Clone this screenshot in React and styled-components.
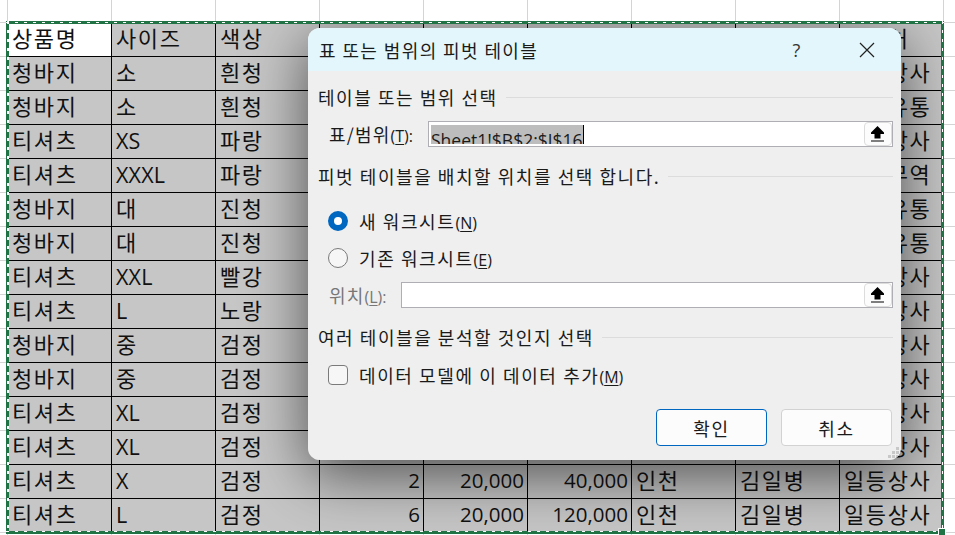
import styled, { createGlobalStyle } from "styled-components";

const GlobalStyle = createGlobalStyle`
  html, body {
    margin: 0;
    padding: 0;
    background: #fff;
    overflow: hidden;
  }
`;

const KO = `"Open Sans", "Noto Sans CJK KR", sans-serif`;

const rows = [
  ["상품명", "사이즈", "색상", "수량", "단가", "금액", "지역", "담당자", "거래처"],
  ["청바지", "소", "흰청", "3", "30,000", "90,000", "서울", "이대한", "일등상사"],
  ["청바지", "소", "흰청", "5", "30,000", "150,000", "서울", "이대한", "일등유통"],
  ["티셔츠", "XS", "파랑", "4", "20,000", "80,000", "부산", "박민국", "일등상사"],
  ["티셔츠", "XXXL", "파랑", "2", "20,000", "40,000", "부산", "박민국", "일등무역"],
  ["청바지", "대", "진청", "7", "30,000", "210,000", "서울", "이대한", "일등유통"],
  ["청바지", "대", "진청", "1", "30,000", "30,000", "서울", "이대한", "일등유통"],
  ["티셔츠", "XXL", "빨강", "3", "20,000", "60,000", "대구", "최만세", "일등상사"],
  ["티셔츠", "L", "노랑", "6", "20,000", "120,000", "대구", "최만세", "일등상사"],
  ["청바지", "중", "검정", "2", "30,000", "60,000", "광주", "정나라", "일등상사"],
  ["청바지", "중", "검정", "4", "30,000", "120,000", "광주", "정나라", "일등상사"],
  ["티셔츠", "XL", "검정", "5", "20,000", "100,000", "인천", "김일병", "일등상사"],
  ["티셔츠", "XL", "검정", "3", "20,000", "60,000", "인천", "김일병", "일등상사"],
  ["티셔츠", "X", "검정", "2", "20,000", "40,000", "인천", "김일병", "일등상사"],
  ["티셔츠", "L", "검정", "6", "20,000", "120,000", "인천", "김일병", "일등상사"],
];

const Sheet = styled.div`
  position: relative;
  width: 955px;
  height: 535px;
  overflow: hidden;
  padding: 23px 0 0 8px;
  box-sizing: border-box;
  background-color: #fff;
  background-image:
    repeating-linear-gradient(to right, #d4d4d4 0 1px, transparent 1px 104px),
    repeating-linear-gradient(to bottom, #d4d4d4 0 1px, transparent 1px 34px);
  background-position: 7px 0, 0 22px;
  font-family: ${KO};
`;

const Range = styled.div`
  position: relative;
  display: grid;
  grid-template-columns: repeat(9, 104px);
  grid-auto-rows: 34px;
  width: 936px;
  background: #c6c6c6;
`;

const Cell = styled.div`
  box-sizing: border-box;
  height: 34px;
  padding: 0 3px 0 4px;
  border-right: 1px solid #000;
  border-bottom: 1px solid #000;
  background: ${(p) => (p.$active ? "#fff" : "transparent")};
  color: #111;
  font-size: ${(p) => (p.$num ? 20.5 : p.$latin ? 21.5 : 22)}px;
  line-height: 31px;
  letter-spacing: ${(p) => (p.$num ? 0 : p.$latin ? 0.2 : 1.6)}px;
  white-space: nowrap;
  text-align: ${(p) => (p.$num ? "right" : "left")};
`;

/* shadow of the dialog, only visible over the copied range */
const ShadeClip = styled.div`
  position: absolute;
  inset: 0;
  overflow: hidden;
  pointer-events: none;
`;

const Shade = styled.div`
  position: absolute;
  left: 300px;
  top: 5px;
  width: 593px;
  height: 432px;
  border-radius: 12px;
  box-shadow: 0 14px 60px rgba(0, 0, 0, 0.62);
`;

const Ants = styled.div`
  position: absolute;
  inset: -2px 0 -1px -2px;
  border: 3px solid #217346;
  pointer-events: none;
  &::after {
    content: "";
    position: absolute;
    inset: -3px;
    background:
      repeating-linear-gradient(to right, #fff 0 3px, transparent 3px 9px) 0 1px / 100% 1px no-repeat,
      repeating-linear-gradient(to right, #fff 0 3px, transparent 3px 9px) 0 calc(100% - 2px) / 100% 1px no-repeat,
      repeating-linear-gradient(to bottom, #fff 0 3px, transparent 3px 9px) 1px 0 / 2px 100% no-repeat,
      repeating-linear-gradient(to bottom, #fff 0 3px, transparent 3px 9px) calc(100% - 1px) 0 / 1px 100% no-repeat;
  }
`;

const Handle = styled.div`
  position: absolute;
  right: -5px;
  bottom: -5px;
  width: 6px;
  height: 6px;
  background: #217346;
  border: 1px solid #fff;
  z-index: 1;
`;

const Dialog = styled.div`
  position: absolute;
  left: 308px;
  top: 28px;
  width: 593px;
  height: 432px;
  border-radius: 12px;
  overflow: hidden;
  background: #efefef;
  color: #1a1a1a;
  font-family: "Noto Sans CJK KR", "Open Sans", sans-serif;
  font-size: 18px;
  display: flex;
  flex-direction: column;
`;

const TitleBar = styled.div`
  flex: none;
  height: 43px;
  background: #e3f6fb;
  display: flex;
  align-items: center;
  padding-left: 11px;
  letter-spacing: 1.4px;
`;

const TitleText = styled.span`
  flex: 1;
`;

const HelpButton = styled.span`
  width: 24px;
  margin-right: 50px;
  text-align: center;
  font-family: "Open Sans", sans-serif;
  font-size: 18px;
  color: #333;
`;

const CloseButton = styled.svg`
  width: 16px;
  height: 16px;
  margin-right: 26px;
`;

const Body = styled.div`
  flex: 1;
  position: relative;
  padding: 14px 8px 14px 10px;
  display: flex;
  flex-direction: column;
`;

const Section = styled.div`
  display: flex;
  align-items: center;
  gap: 8px;
  height: 24px;
  letter-spacing: 1.55px;
  margin-top: ${(p) => p.$top || 0}px;
  &::after {
    content: "";
    flex: 1;
    height: 1px;
    background: #dcdcdc;
  }
`;

const FieldRow = styled.div`
  display: flex;
  align-items: center;
  height: 26px;
  padding-left: ${(p) => p.$indent}px;
  margin-top: ${(p) => p.$top}px;
  color: ${(p) => (p.$disabled ? "#777" : "inherit")};
  letter-spacing: 1.2px;
`;

const Label = styled.span`
  width: ${(p) => p.$width}px;
  flex: none;
  white-space: nowrap;
`;

const RefInput = styled.div`
  position: relative;
  flex: 1;
  height: 26px;
  box-sizing: border-box;
  background: #fff;
  border: 1px solid #aeaeb4;
  overflow: hidden;
`;

const Selected = styled.span`
  position: absolute;
  left: 2px;
  top: 3px;
  height: 19px;
  overflow: hidden;
  background: #bdbdbd;
  border-right: 1px solid #000;
  color: #1a1a1a;
  font-family: "Open Sans", sans-serif;
  font-size: 17.5px;
  letter-spacing: 0;
  line-height: 30px;
  white-space: nowrap;
`;

const CollapseButton = styled.div`
  position: absolute;
  right: 0;
  top: 0;
  width: 28px;
  height: 24px;
  box-sizing: border-box;
  padding-right: 2px;
  background: #fcfcfc;
  border: 1px solid #dcdcdc;
  border-radius: 4px;
  display: flex;
  align-items: center;
  justify-content: center;
`;

const Option = styled.label`
  display: flex;
  align-items: center;
  gap: 11px;
  height: 24px;
  padding-left: 10px;
  margin-top: ${(p) => p.$top}px;
  letter-spacing: 1.6px;
`;

const Radio = styled.span`
  flex: none;
  box-sizing: border-box;
  width: 20px;
  height: 20px;
  border-radius: 50%;
  border: ${(p) => (p.$on ? "6px solid #0067c0" : "1px solid #7a7a7a")};
  background: ${(p) => (p.$on ? "#fff" : "#f6f6f6")};
`;

const Check = styled.span`
  flex: none;
  box-sizing: border-box;
  width: 20px;
  height: 20px;
  border-radius: 4px;
  border: 1px solid #7a7a7a;
  background: #f6f6f6;
`;

const Key = styled.span`
  font-family: "Open Sans", sans-serif;
  font-size: 16px;
  letter-spacing: 0;
  u {
    text-underline-offset: 2px;
  }
`;

const Footer = styled.div`
  display: flex;
  justify-content: flex-end;
  gap: 14px;
  margin-top: 22px;
  padding-right: 1px;
`;

const Button = styled.div`
  box-sizing: border-box;
  width: 111px;
  height: 37px;
  display: flex;
  align-items: center;
  justify-content: center;
  border-radius: 4px;
  background: #fcfcfc;
  border: 1px solid ${(p) => (p.$primary ? "#0067c0" : "#d2d2d2")};
  letter-spacing: 1.6px;
`;

const Grip = styled.svg`
  position: absolute;
  right: 1px;
  bottom: 1px;
  width: 12px;
  height: 12px;
`;

const UpArrow = () => (
  <svg width="15" height="16" viewBox="0 0 15 16">
    <path d="M7.5 0 14 6.5V8H10.5V12.5H4.5V8H1V6.5Z" fill="#000" />
    <rect x="1" y="14.5" width="13" height="1" fill="#000" />
  </svg>
);

const App = () => {
  return (
    <>
      <GlobalStyle />
      <Sheet>
        <Range>
          {rows.map((row, r) =>
            row.map((text, c) => (
              <Cell
                key={`${r}-${c}`}
                $active={r === 0 && c === 0}
                $num={r > 0 && c >= 3 && c <= 5}
                $latin={/^[A-Z]+$/.test(text)}
              >
                {text}
              </Cell>
            ))
          )}
          <ShadeClip>
            <Shade />
          </ShadeClip>
          <Ants>
            <Handle />
          </Ants>
        </Range>
        <Dialog>
          <TitleBar>
            <TitleText>표 또는 범위의 피벗 테이블</TitleText>
            <HelpButton>?</HelpButton>
            <CloseButton viewBox="0 0 16 16">
              <path d="M1 1 15 15M15 1 1 15" stroke="#222" strokeWidth="1.2" fill="none" />
            </CloseButton>
          </TitleBar>
          <Body>
            <Section>테이블 또는 범위 선택</Section>
            <FieldRow $indent={11} $top={12}>
              <Label $width={99}>
                표/범위<Key>(<u>T</u>):</Key>
              </Label>
              <RefInput>
                <Selected>Sheet1!$B$2:$J$16</Selected>
                <CollapseButton>
                  <UpArrow />
                </CollapseButton>
              </RefInput>
            </FieldRow>
            <Section $top={17}>피벗 테이블을 배치할 위치를 선택 합니다.</Section>
            <Option $top={21}>
              <Radio $on />
              <span>
                새 워크시트<Key>(<u>N</u>)</Key>
              </span>
            </Option>
            <Option $top={13}>
              <Radio />
              <span>
                기존 워크시트<Key>(<u>E</u>)</Key>
              </span>
            </Option>
            <FieldRow $indent={11} $top={12} $disabled>
              <Label $width={72}>
                위치<Key>(<u>L</u>):</Key>
              </Label>
              <RefInput>
                <CollapseButton>
                  <UpArrow />
                </CollapseButton>
              </RefInput>
            </FieldRow>
            <Section $top={17}>여러 테이블을 분석할 것인지 선택</Section>
            <Option $top={14}>
              <Check />
              <span>
                데이터 모델에 이 데이터 추가<Key>(<u>M</u>)</Key>
              </span>
            </Option>
            <Footer>
              <Button $primary>확인</Button>
              <Button>취소</Button>
            </Footer>
            <Grip viewBox="0 0 12 12">
              <path d="M8 0h3v3H8zM4 4h3v3H4zM8 4h3v3H8zM0 8h3v3H0zM4 8h3v3H4zM8 8h3v3H8z" fill="#c8c8c8" />
            </Grip>
          </Body>
        </Dialog>
      </Sheet>
    </>
  );
};

export default App;
